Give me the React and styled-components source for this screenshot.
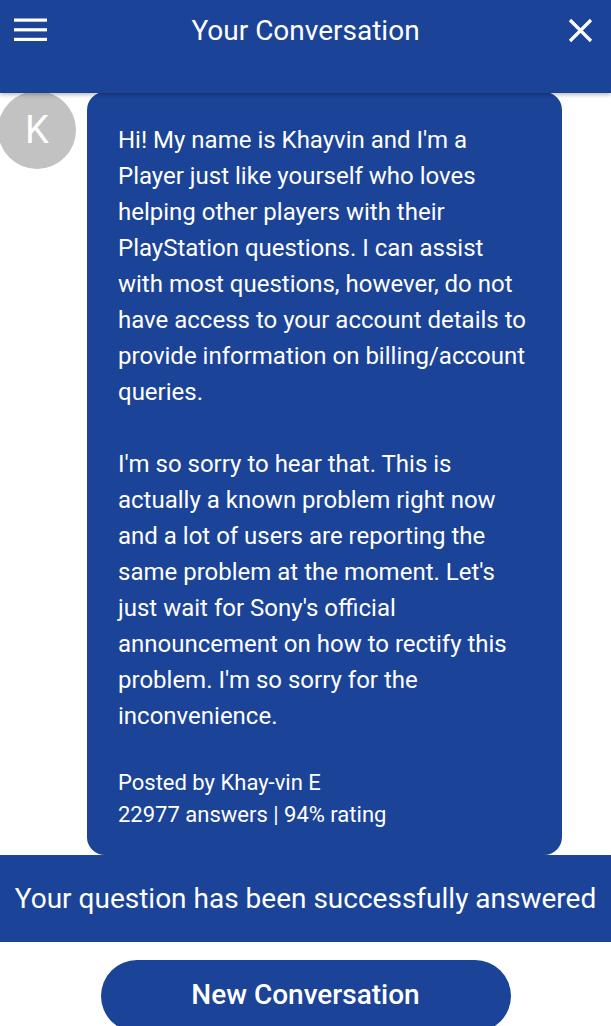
import React from "react";
import styled, { createGlobalStyle } from "styled-components";

const BLUE = "#1b4397";

const Global = createGlobalStyle`
  html, body { margin: 0; padding: 0; background: #fff; }
  body { font-family: Roboto, "Noto Sans", Arial, sans-serif; color: #fff; }
  * { box-sizing: border-box; }
`;

const Page = styled.div`
  width: 611px;
  display: flex;
  flex-direction: column;
  overflow: hidden;
`;

const Header = styled.header`
  position: relative;
  z-index: 2;
  height: 93px;
  background: ${BLUE};
  box-shadow: 0 2px 4px rgba(0, 0, 0, 0.25);
  display: grid;
  grid-template-columns: 62px 1fr 62px;
  align-items: start;
`;

const HeaderCell = styled.div`
  height: 60px;
  display: flex;
  align-items: center;
  justify-content: ${(p) => p.$justify || "center"};
  padding: ${(p) => p.$pad || "0"};
`;

const Title = styled.h1`
  margin: 0;
  font-size: 28px;
  font-weight: 400;
  color: #fff;
  letter-spacing: 0;
`;

const Thread = styled.div`
  display: flex;
  align-items: flex-start;
  gap: 11px;
  margin-top: -1px;
`;

const Avatar = styled.div`
  flex: none;
  width: 78px;
  height: 78px;
  margin-left: -2px;
  margin-top: -1px;
  border-radius: 50%;
  background: #c2c2c2;
  color: #fff;
  font-size: 38px;
  display: flex;
  align-items: center;
  justify-content: center;
`;

const Bubble = styled.div`
  width: 475px;
  background: ${BLUE};
  border-radius: 18px;
  padding: 30px 28px 24px 31px;
`;

const Para = styled.p`
  margin: 0 0 36px;
  font-size: 24px;
  line-height: 36px;
  color: #fff;
  &:last-of-type { margin-bottom: 33px; }
`;

const Meta = styled.div`
  font-size: 22px;
  line-height: 32px;
  color: #fff;
`;

const Banner = styled.div`
  height: 87px;
  background: ${BLUE};
  display: flex;
  align-items: center;
  justify-content: center;
  font-size: 28px;
  color: #fff;
  white-space: nowrap;
`;

const ButtonRow = styled.div`
  display: flex;
  justify-content: center;
  padding-top: 18px;
`;

const NewButton = styled.button`
  width: 410px;
  height: 72px;
  border: none;
  border-radius: 36px;
  background: ${BLUE};
  color: #fff;
  font-family: Roboto, sans-serif;
  font-size: 28px;
  font-weight: 500;
  padding: 0 0 4px;
`;

const IconBtn = styled.div`
  display: flex;
  color: #fff;
`;

export default function App() {
  return (
    <>
      <Global />
      <Page>
        <Header>
          <HeaderCell $justify="flex-start" $pad="0 0 0 14px">
            <IconBtn>
              <svg width="34" height="24" viewBox="0 0 34 24">
                <rect x="0" y="0.5" width="33" height="3.2" fill="#fff" />
                <rect x="0" y="10.2" width="33" height="3.2" fill="#fff" />
                <rect x="0" y="19.8" width="33" height="3.2" fill="#fff" />
              </svg>
            </IconBtn>
          </HeaderCell>
          <HeaderCell>
            <Title>Your Conversation</Title>
          </HeaderCell>
          <HeaderCell $justify="flex-end" $pad="0 18px 0 0">
            <IconBtn>
              <svg width="25" height="25" viewBox="0 0 25 25">
                <path d="M2 2 L23 23 M23 2 L2 23" stroke="#fff" strokeWidth="3.2" />
              </svg>
            </IconBtn>
          </HeaderCell>
        </Header>
        <Thread>
          <Avatar>K</Avatar>
          <Bubble>
            <Para>
              Hi! My name is Khayvin and I'm a Player just like yourself who loves helping other
              players with their PlayStation questions. I can assist with most questions, however,
              do not have access to your account details to provide information on billing/account
              queries.
            </Para>
            <Para>
              I'm so sorry to hear that. This is actually a known problem right now and a lot of
              users are reporting the same problem at the moment. Let's just wait for Sony's
              official announcement on how to rectify this problem. I'm so sorry for the
              inconvenience.
            </Para>
            <Meta>Posted by Khay-vin E</Meta>
            <Meta>22977 answers | 94% rating</Meta>
          </Bubble>
        </Thread>
        <Banner>Your question has been successfully answered</Banner>
        <ButtonRow>
          <NewButton>New Conversation</NewButton>
        </ButtonRow>
      </Page>
    </>
  );
}
